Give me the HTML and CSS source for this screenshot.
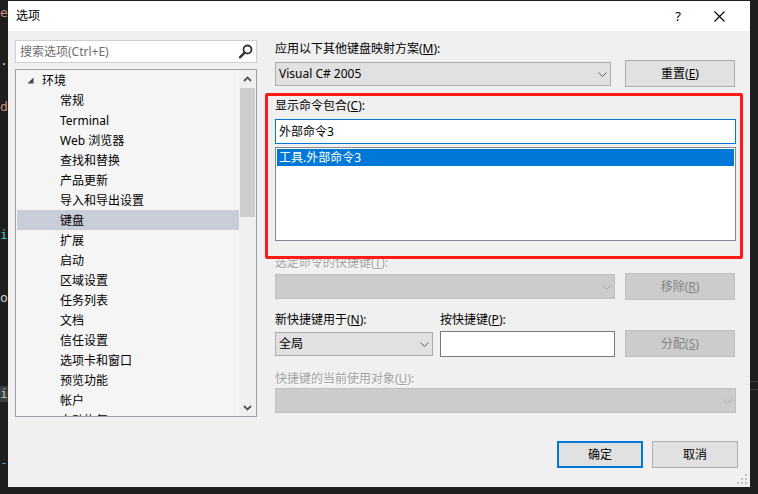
FILE: index.html
```html
<!DOCTYPE html>
<html lang="zh-CN">
<head>
<meta charset="utf-8">
<title>选项</title>
<link rel="stylesheet" href="styles.css">
</head>
<body>
<div class="desk">
  <div class="editor editor-left">
    <span class="code c-str" style="top:4px">er</span>
    <span class="code c-txt" style="top:52px">.(</span>
    <span class="code c-str" style="top:98px">de</span>
    <span class="code c-type" style="top:226px">i:</span>
    <span class="code c-txt" style="top:289px">o:</span>
    <span class="code c-num hl" style="top:385px">ir</span>
    <span class="code c-key" style="top:454px">-(</span>
  </div>

  <div class="dialog">
    <div class="titlebar">
      <span class="title">选项</span>
      <span class="help">?</span>
      <span class="close">
        <svg width="11" height="11" viewBox="0 0 11 11"><path d="M.5 .5l10 10M10.5 .5l-10 10" stroke="#000" stroke-width="1.1" fill="none"/></svg>
      </span>
    </div>

    <div class="body">
      <div class="main">
        <div class="left">
          <div class="search">
            <span class="placeholder">搜索选项(Ctrl+E)</span>
            <svg class="search-icon" width="14" height="15" viewBox="0 0 14 15"><circle cx="8.5" cy="5.5" r="4" stroke="#333" stroke-width="1.8" fill="none"/><path d="M5.6 8.6L1 13.4" stroke="#333" stroke-width="2.4" stroke-linecap="round"/></svg>
          </div>
          <div class="tree">
            <div class="tree-items">
              <div class="node root">
                <svg class="twisty" width="7" height="7" viewBox="0 0 7 7"><path d="M6.5 0.5V6.5H0.5Z" fill="#444"/></svg>
                <span>环境</span>
              </div>
              <div class="node">常规</div>
              <div class="node">Terminal</div>
              <div class="node">Web 浏览器</div>
              <div class="node">查找和替换</div>
              <div class="node">产品更新</div>
              <div class="node">导入和导出设置</div>
              <div class="node selected">键盘</div>
              <div class="node">扩展</div>
              <div class="node">启动</div>
              <div class="node">区域设置</div>
              <div class="node">任务列表</div>
              <div class="node">文档</div>
              <div class="node">信任设置</div>
              <div class="node">选项卡和窗口</div>
              <div class="node">预览功能</div>
              <div class="node">帐户</div>
              <div class="node">自动恢复</div>
            </div>
            <div class="scrollbar">
              <div class="arrow">
                <svg width="9" height="6" viewBox="0 0 9 6"><path d="M1 5l3.5-3.5L8 5" stroke="#555" stroke-width="1.8" fill="none"/></svg>
              </div>
              <div class="track">
                <div class="thumb"></div>
              </div>
              <div class="arrow">
                <svg width="9" height="6" viewBox="0 0 9 6"><path d="M1 1l3.5 3.5L8 1" stroke="#555" stroke-width="1.8" fill="none"/></svg>
              </div>
            </div>
          </div>
        </div>

        <div class="right">
          <div class="label">应用以下其他键盘映射方案(<u>M</u>):</div>
          <div class="row row-scheme">
            <div class="combo w-scheme">
              <span>Visual C# 2005</span>
              <svg class="chev" width="9" height="5" viewBox="0 0 9 5"><path d="M.5 .5l4 4 4-4" stroke="#606060" fill="none"/></svg>
            </div>
            <div class="btn w-side">重置(<u>E</u>)</div>
          </div>

          <div class="label gap-cmd">显示命令包合(<u>C</u>):</div>
          <div class="textbox focused">外部命令3</div>
          <div class="listbox">
            <div class="list-item active">工具.外部命令3</div>
          </div>

          <div class="label disabled gap-keys">选定命令的快捷键(<u>T</u>):</div>
          <div class="row row-keys">
            <div class="combo off w-keys">
              <span></span>
              <svg class="chev" width="9" height="5" viewBox="0 0 9 5"><path d="M.5 .5l4 4 4-4" stroke="#a8a8a8" fill="none"/></svg>
            </div>
            <div class="btn off w-side">移除(<u>R</u>)</div>
          </div>

          <div class="label-row">
            <div class="label">新快捷键用于(<u>N</u>):</div>
            <div class="label">按快捷键(<u>P</u>):</div>
          </div>
          <div class="row row-new">
            <div class="combo w-scope">
              <span>全局</span>
              <svg class="chev" width="9" height="5" viewBox="0 0 9 5"><path d="M.5 .5l4 4 4-4" stroke="#606060" fill="none"/></svg>
            </div>
            <div class="textbox plain w-press"></div>
            <div class="btn off w-side">分配(<u>S</u>)</div>
          </div>

          <div class="label disabled gap-used">快捷键的当前使用对象(<u>U</u>):</div>
          <div class="combo off w-full">
            <span></span>
            <svg class="chev" width="9" height="5" viewBox="0 0 9 5"><path d="M.5 .5l4 4 4-4" stroke="#a8a8a8" fill="none"/></svg>
          </div>
        </div>
      </div>

      <div class="footer">
        <div class="btn default w-foot">确定</div>
        <div class="btn w-foot">取消</div>
      </div>
    </div>

    <div class="callout"></div>
    <svg class="grip" width="10" height="10" viewBox="0 0 10 10" fill="#bdbdbd">
      <rect x="8" y="0" width="2" height="2"/>
      <rect x="4" y="4" width="2" height="2"/><rect x="8" y="4" width="2" height="2"/>
      <rect x="0" y="8" width="2" height="2"/><rect x="4" y="8" width="2" height="2"/><rect x="8" y="8" width="2" height="2"/>
    </svg>
  </div>

  <div class="editor editor-right">
    <div class="rule"></div>
    <div class="rule"></div>
  </div>
</div>
</body>
</html>
```

FILE: styles.css
```css
* { box-sizing: border-box; }

html, body {
  margin: 0;
  padding: 0;
}

body {
  width: 758px;
  height: 494px;
  overflow: hidden;
  background: #1e1e1e;
  font-family: "Noto Sans", "Noto Sans CJK SC", sans-serif;
  font-size: 12px;
  line-height: 16px;
  color: #000;
}

u { text-decoration: underline; text-underline-offset: 1px; }

.desk {
  display: flex;
  padding-top: 1px;
  height: 494px;
}

/* editor text peeking out behind the dialog */
.editor {
  position: relative;
  width: 8px;
  flex: none;
  overflow: hidden;
}
.editor-left { background: #1e1e1e; }
.code {
  position: absolute;
  left: 0;
  width: 8px;
  height: 16px;
  font-family: "DejaVu Sans Mono", monospace;
  font-size: 13px;
  line-height: 16px;
  white-space: nowrap;
}
.c-str { color: #ce9178; }
.c-txt { color: #cfcfcf; }
.c-type { color: #4ec9b0; }
.c-num { color: #b5cea8; }
.c-key { color: #569cd6; }
.hl { background: #3a3d41; }

.editor-right {
  background: #1e1e1e;
  padding-top: 380px;
  display: flex;
  flex-direction: column;
  gap: 7px;
}
.rule { height: 1px; background: #3c3c3c; }

/* dialog window */
.dialog {
  position: relative;
  width: 742px;
  height: 486px;
  flex: none;
  background: #f0f0f0;
  display: flex;
  flex-direction: column;
}

.titlebar {
  height: 30px;
  flex: none;
  background: #fff;
  display: flex;
  align-items: center;
  padding-left: 8px;
}
.title { flex: 1; font-size: 12px; }
.help {
  width: 12px;
  margin-right: 30px;
  font-size: 13px;
  text-align: center;
}
.close {
  display: flex;
  margin-right: 25px;
}

.body {
  flex: 1;
  display: flex;
  flex-direction: column;
  padding: 9px 12px 0 7px;
}

.main {
  display: grid;
  grid-template-columns: 242px 461px;
  column-gap: 18px;
  align-items: start;
}

/* left column: search + tree */
.search {
  height: 23px;
  background: #fff;
  border: 1px solid #cccedb;
  display: flex;
  align-items: center;
  padding-left: 4px;
  padding-right: 3px;
}
.placeholder { flex: 1; color: #6d6d6d; }
.search-icon { flex: none; }

.tree {
  margin-top: 6px;
  height: 348px;
  border: 1px solid #a0a0a8;
  background: #f5f5f5;
  display: flex;
  overflow: hidden;
}
.tree-items {
  flex: 1;
  padding-left: 1px;
  overflow: hidden;
}
.node {
  height: 20px;
  line-height: 22px;
  padding-left: 43px;
  white-space: nowrap;
}
.node.root {
  display: flex;
  align-items: center;
  padding-left: 10px;
}
.node.root span { margin-top: 2px; line-height: 20px; }
.twisty { margin-right: 8px; margin-top: 0; }
.node.selected { background: #c9ccd9; }

.scrollbar {
  width: 17px;
  flex: none;
  background: #f0f0f0;
  display: flex;
  flex-direction: column;
}
.arrow {
  height: 17px;
  display: flex;
  align-items: center;
  justify-content: center;
}
.track { flex: 1; padding: 1px 1px 0 1px; }
.thumb { height: 129px; background: #cdcdcd; }

/* right column */
.label { height: 16px; line-height: 18px; white-space: nowrap; }
.label.disabled { color: #a0a0a0; text-shadow: 1px 1px 0 #fff; }

.row {
  display: flex;
  align-items: center;
  height: 27px;
}
.row-scheme { margin-top: 4px; gap: 14px; }
.row-keys { margin-top: 3px; gap: 10px; }
.row-new { margin-top: 3px; }
.row-new .textbox { margin-left: 7px; margin-right: 10px; }

.gap-cmd { margin-top: 10px; }
.gap-keys { margin-top: 13px; }
.gap-used { margin-top: 13px; }

.label-row {
  margin-top: 11px;
  display: grid;
  grid-template-columns: 165px 1fr;
}

.combo {
  height: 24px;
  background: #e1e1e1;
  border: 1px solid #adadad;
  display: flex;
  align-items: center;
  padding: 0 3px 0 3px;
}
.combo span { flex: 1; white-space: nowrap; }
.combo .chev { flex: none; margin-top: 1px; }
.combo.off { background: #cccccc; border-color: #bfbfbf; height: 25px; }

.w-scheme { width: 336px; }
.w-keys { width: 340px; }
.w-scope { width: 158px; }
.w-full { width: 461px; margin-top: 2px; }
.w-press { width: 175px; }
.w-side { width: 110px; }
.w-foot { width: 86px; }

.btn {
  height: 27px;
  background: #e1e1e1;
  border: 1px solid #adadad;
  display: flex;
  align-items: center;
  justify-content: center;
  flex: none;
}
.btn.off { background: #cccccc; border-color: #bfbfbf; color: #838383; }
.btn.default { border: 2px solid #0078d7; }

.textbox {
  height: 25px;
  background: #fff;
  border: 1px solid #7a7a7a;
  display: flex;
  align-items: center;
  padding-left: 3px;
}
.textbox.focused {
  margin-top: 6px;
  border-color: #0078d7;
}
.textbox.plain { height: 26px; }

.listbox {
  margin-top: 3px;
  height: 94px;
  background: #fff;
  border: 1px solid #828790;
  padding: 1px;
}
.list-item {
  height: 17px;
  line-height: 17px;
  padding-left: 2px;
}
.list-item.active { background: #0078d7; color: #fff; }

.footer {
  margin-top: 24px;
  display: flex;
  justify-content: flex-end;
  gap: 9px;
}

/* review annotation drawn over the command filter */
.callout {
  position: absolute;
  left: 257px;
  top: 92px;
  width: 478px;
  height: 166px;
  border: 3px solid #ff1a1a;
  border-radius: 2px;
  pointer-events: none;
}

.grip {
  position: absolute;
  right: 3px;
  bottom: 3px;
}
```
